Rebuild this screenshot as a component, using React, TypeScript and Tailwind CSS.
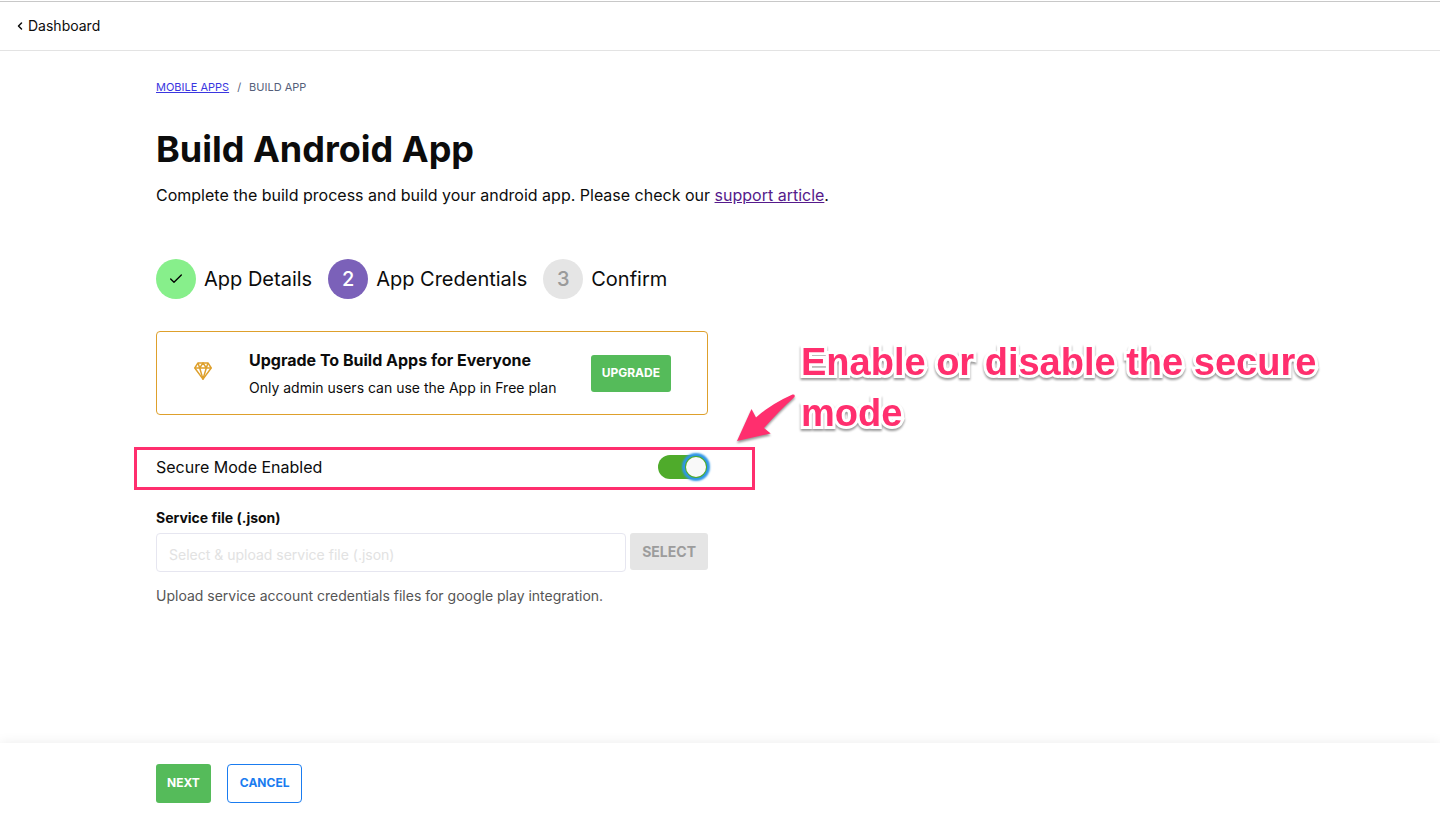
import { useState } from "react";
import { Check, ChevronLeft } from "lucide-react";

const steps = [
  { label: "App Details", status: "done" },
  { label: "App Credentials", status: "current" },
  { label: "Confirm", status: "upcoming" }
];

const badgeStyles: Record<string, string> = {
  done: "bg-[#87ef8b] text-black",
  current: "bg-[#7b61b9] font-medium text-white",
  upcoming: "bg-[#e5e5e5] font-medium text-[#9a9a9a]"
};

function TopBar() {
  return (
    <header className="mt-px flex h-[50px] items-center border-t border-b border-t-[#c8c8c8] border-b-[#e3e3e3] px-4">
      <a href="#dashboard" className="flex items-center gap-0.5 text-sm">
        <ChevronLeft className="-ml-0.5 h-3 w-3" strokeWidth={3} />
        Dashboard
      </a>
    </header>
  );
}

function Breadcrumb() {
  return (
    <nav aria-label="Breadcrumb" className="flex gap-2 text-[11px] leading-4 text-[#565f7a]">
      <a href="#apps" className="text-[#3a36e0] underline">
        MOBILE APPS
      </a>
      <span>/</span>
      <span>BUILD APP</span>
    </nav>
  );
}

function Steps() {
  return (
    <ol className="mt-[51px] flex gap-4">
      {steps.map((step, index) => (
        <li key={step.label} className="flex items-center gap-2 text-xl whitespace-nowrap">
          <span
            className={`flex h-10 w-10 items-center justify-center rounded-full ${badgeStyles[step.status]}`}
          >
            {step.status === "done" ? (
              <Check className="h-4 w-4" strokeWidth={2} />
            ) : (
              index + 1
            )}
          </span>
          {step.label}
        </li>
      ))}
    </ol>
  );
}

function DiamondIcon() {
  return (
    <svg
      viewBox="0 0 18 18"
      className="h-[18px] w-[18px]"
      fill="none"
      stroke="#dea02c"
      strokeWidth="1.5"
      strokeLinejoin="round"
      aria-hidden="true"
    >
      <path d="M4 .9h10L17.2 6 9 17.1.8 6z" />
      <path d="M.8 6h16.4M4 .9 5.7 6 9 17.1 12.3 6 14 .9M5.7 6 9 .9 12.3 6" />
    </svg>
  );
}

function UpgradeCard() {
  return (
    <section className="mt-8 flex h-21 items-center rounded border border-[#dea02c] pr-9">
      <div className="flex w-23 shrink-0 justify-center pb-1">
        <DiamondIcon />
      </div>
      <div className="flex-1 pt-0.5">
        <h2 className="text-base leading-6 font-bold">Upgrade To Build Apps for Everyone</h2>
        <p className="mt-1 text-sm leading-6">Only admin users can use the App in Free plan</p>
      </div>
      <button
        type="button"
        className="h-[37px] rounded-[3px] bg-[#55bb5a] px-[11px] text-xs font-bold text-white"
      >
        UPGRADE
      </button>
    </section>
  );
}

function SecureMode() {
  const [enabled, setEnabled] = useState(true);

  return (
    <div className="relative mt-10 flex h-6 items-center justify-between">
      <label htmlFor="secure-mode">Secure Mode Enabled</label>
      <input
        id="secure-mode"
        type="checkbox"
        role="switch"
        checked={enabled}
        onChange={(event) => setEnabled(event.target.checked)}
        className="relative h-6 w-[50px] appearance-none rounded-full bg-[#b5b5b5] before:absolute before:top-0.5 before:left-0.5 before:h-5 before:w-5 before:rounded-full before:bg-[#f9f9f9] checked:bg-[#4fab2b] checked:before:left-7 checked:before:shadow-[0_0_0_1px_#4fab2b,0_0_2px_4px_#2f97e6]"
      />
      <div className="pointer-events-none absolute -top-2 -right-[47px] -bottom-[11px] -left-[22px] border-3 border-[#ff2f6e]" />
    </div>
  );
}

function ServiceFile() {
  return (
    <div className="mt-[30px]">
      <label htmlFor="service-file" className="block text-sm leading-[18px] font-bold">
        Service file (.json)
      </label>
      <div className="mt-1.5 flex items-start gap-1">
        <input
          id="service-file"
          type="text"
          placeholder="Select & upload service file (.json)"
          className="h-[39px] min-w-0 flex-1 rounded border border-[#e6e6f0] px-3 pt-1 text-sm placeholder:text-[#e2e2e2]"
        />
        <button
          type="button"
          className="h-[37px] rounded-[3px] bg-[#e5e5e5] px-3 text-sm font-bold text-[#9c9c9c]"
        >
          SELECT
        </button>
      </div>
      <p className="mt-3.5 text-sm leading-5 text-[#555]">
        Upload service account credentials files for google play integration.
      </p>
    </div>
  );
}

function Callout() {
  return (
    <aside className="absolute top-1.5 left-full">
      <svg
        viewBox="0 0 62 52"
        className="absolute top-14 left-[27px] h-[52px] w-[62px] drop-shadow-[0_2px_1px_rgba(0,0,0,0.4)]"
        aria-hidden="true"
      >
        <path
          d="M2 48 16.5 16 21 24.500Q36 11 57.500 1.500 60.500 1 59.500 4 45 17 29 35L35.700 40.500Z"
          fill="#ff2f6e"
        />
      </svg>
      <p className="ml-[93px] w-[540px] font-['Liberation_Sans',sans-serif] text-[38px] leading-[51px] font-bold text-[#ff2f6e] drop-shadow-[0_2px_1px_rgba(0,0,0,0.4)] [-webkit-text-stroke:6px_white] [paint-order:stroke_fill]">
        Enable or disable the secure mode
      </p>
    </aside>
  );
}

export default function App() {
  return (
    <div className="flex min-h-screen flex-col overflow-x-hidden bg-white font-['Inter',sans-serif] text-[#0c0c0c]">
      <TopBar />

      <main className="flex-1 px-[156px] pt-7 pb-8">
        <Breadcrumb />
        <h1 className="mt-[30px] text-4xl leading-12 font-bold">Build Android App</h1>
        <p className="mt-2.5 text-base leading-6">
          Complete the build process and build your android app. Please check our{" "}
          <a href="#support" className="text-[#551a8b] underline">
            support article
          </a>
          .
        </p>

        <div className="pt-px">
          <Steps />
        </div>

        <div className="relative max-w-[552px]">
          <UpgradeCard />
          <SecureMode />
          <ServiceFile />
          <Callout />
        </div>
      </main>

      <footer className="flex h-20 items-center gap-4 bg-white px-[156px] shadow-[0_0_12px_rgba(0,0,0,0.08)]">
        <button
          type="button"
          className="h-[39px] rounded-[3px] bg-[#55bb5a] px-[11px] text-xs font-bold text-white"
        >
          NEXT
        </button>
        <button
          type="button"
          className="h-[39px] rounded border border-[#1a7cf0] px-3 text-xs font-bold text-[#1a7cf0]"
        >
          CANCEL
        </button>
      </footer>
    </div>
  );
}
